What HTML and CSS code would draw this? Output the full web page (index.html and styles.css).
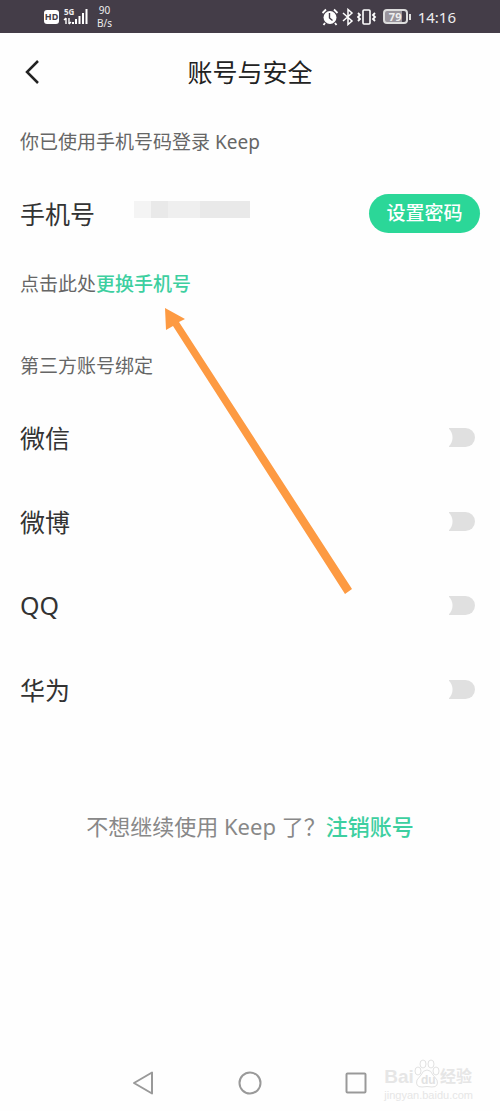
FILE: index.html
```html
<!DOCTYPE html>
<html lang="zh-CN">
<head>
  <meta charset="UTF-8">
  <meta name="viewport" content="width=device-width, initial-scale=1.0">
  <title>账号与安全</title>
  <link rel="stylesheet" href="styles.css">
</head>
<body>
  <div class="status-bar">
    <div class="status-left">
      <span class="hd">HD</span>
      <div class="signal">
        <span>5G</span>
        <svg width="26" height="20" viewBox="0 0 26 20" fill="#fff">
          <path d="M3 17v-6M1 13l2-2M6 11v6M6 17l2-2" fill="none" stroke="#fff" stroke-width="1.400"/>
          <rect x="9" y="15" width="2" height="2"/>
          <rect x="12" y="12" width="2" height="5"/>
          <rect x="15.500" y="9" width="2" height="8"/>
          <rect x="19" y="6" width="2" height="11"/>
          <rect x="22.500" y="2" width="2" height="15"/>
        </svg>
      </div>
      <div class="net-speed"><span>90</span><span>B/s</span></div>
    </div>
    <div class="status-right">
      <svg width="18" height="18" viewBox="0 0 18 18">
        <circle cx="9" cy="9.500" r="6.500" fill="#fff"/>
        <path d="M1.500 5L5 1.500M16.500 5L13 1.500M4 15l-1.500 2M14 15l1.500 2" stroke="#fff" stroke-width="1.800"/>
        <path d="M8.500 5v5l3 2.500" fill="none" stroke="#443d48" stroke-width="1.400"/>
      </svg>
      <svg width="12" height="18" viewBox="0 0 12 18">
        <path d="M1 5l9 8-4 3.500v-15L10 5l-9 8" fill="none" stroke="#fff" stroke-width="1.500"/>
      </svg>
      <svg width="20" height="18" viewBox="0 0 20 18" fill="none" stroke="#fff">
        <rect x="6" y="2" width="7" height="14" rx="1" stroke-width="1.600"/>
        <path d="M1 5l2 2-2 2 2 2-2 2M18 5l-2 2 2 2-2 2 2 2" stroke-width="1.800"/>
      </svg>
      <div class="battery">79</div>
      <span class="clock">14:16</span>
    </div>
  </div>

  <header class="header">
    <button class="back" aria-label="返回">
      <svg width="16" height="26" viewBox="0 0 16 26">
        <path d="M14 2L3 13l11 11" fill="none" stroke="#222" stroke-width="2.500"/>
      </svg>
    </button>
    <h1>账号与安全</h1>
  </header>

  <main class="content">
    <p class="caption">你已使用手机号码登录 Keep</p>
    <div class="row phone">
      <span>手机号</span>
      <div class="mosaic"><i></i><i></i><i></i><i></i></div>
      <button class="btn">设置密码</button>
    </div>
    <p class="caption hint">点击此处<a href="#">更换手机号</a></p>

    <h2 class="caption">第三方账号绑定</h2>
    <div class="row">
      <label for="wechat">微信</label>
      <input type="checkbox" class="switch" id="wechat">
    </div>
    <div class="row">
      <label for="weibo">微博</label>
      <input type="checkbox" class="switch" id="weibo">
    </div>
    <div class="row">
      <label for="qq">QQ</label>
      <input type="checkbox" class="switch" id="qq">
    </div>
    <div class="row">
      <label for="huawei">华为</label>
      <input type="checkbox" class="switch" id="huawei">
    </div>

    <p class="cancel">不想继续使用 Keep 了？<a href="#">注销账号</a></p>

    <svg class="arrow" width="190" height="288" viewBox="0 0 190 288">
      <path d="M1 0L21 11L15 14L188 281L181 286L9 18L2 22Z" fill="#fd9a42"/>
    </svg>
  </main>

  <nav class="nav-bar">
    <button aria-label="返回上一页">
      <svg width="24" height="24" viewBox="0 0 24 24"><path d="M2 12L20 1.500v21z"/></svg>
    </button>
    <button aria-label="主屏幕">
      <svg width="24" height="24" viewBox="0 0 24 24"><circle cx="12" cy="12" r="10.500"/></svg>
    </button>
    <button aria-label="最近任务">
      <svg width="24" height="24" viewBox="0 0 24 24"><rect x="2.500" y="2.500" width="19" height="19" rx="1"/></svg>
    </button>
    <div class="watermark">
      <div class="wm-logo">
        <span>Bai</span>
        <svg width="26" height="30" viewBox="0 0 26 30">
          <ellipse cx="4" cy="12" rx="3" ry="4"/>
          <ellipse cx="9" cy="5" rx="3" ry="4"/>
          <ellipse cx="17" cy="5" rx="3" ry="4"/>
          <ellipse cx="22" cy="12" rx="3" ry="4"/>
          <path d="M13 11q4 0 6 5l4 5q2 7-5 7-5-1-10 0-7 0-5-7l4-5q2-5 6-5z"/>
          <text x="7" y="25" class="wm-du">du</text>
        </svg>
        <span>经验</span>
      </div>
      <div class="wm-url">jingyan.baidu.com</div>
    </div>
  </nav>
</body>
</html>
```
FILE: styles.css
```css
* {
  box-sizing: border-box;
}

body {
  margin: 0;
  min-height: 100vh;
  display: flex;
  flex-direction: column;
  background: #fefefe;
  color: #333;
  font-family: "Noto Sans", "Noto Sans CJK SC", sans-serif;
}

h1, h2, p {
  margin: 0;
  font-weight: 400;
}

button {
  border: 0;
  padding: 0;
  background: none;
  font-family: inherit;
  cursor: pointer;
}

a {
  color: #3dcfa0;
  font-weight: 500;
  text-decoration: none;
}

svg {
  display: block;
}

.status-bar {
  height: 33px;
  padding: 0 44px;
  display: flex;
  align-items: center;
  justify-content: space-between;
  background: #443d48;
  color: #eee;
}

.status-left,
.status-right {
  display: flex;
  align-items: center;
}

.status-right {
  gap: 3px;
}

.hd {
  width: 15px;
  height: 14px;
  border-radius: 3px;
  background: #fff;
  color: #443d48;
  font-size: 9px;
  font-weight: 700;
  line-height: 14px;
  text-align: center;
}

.signal {
  position: relative;
  margin: 0 8px 0 4px;
}

.signal span {
  position: absolute;
  left: 1px;
  top: 0;
  font-size: 8px;
  font-weight: 700;
  line-height: 10px;
}

.net-speed {
  display: flex;
  flex-direction: column;
  align-items: center;
  font-size: 10px;
  line-height: 13px;
}

.battery {
  position: relative;
  width: 25px;
  height: 15px;
  margin: 0 7px 0 3px;
  border: 2px solid #ddd;
  border-radius: 4px;
  background: linear-gradient(90deg, #99949c 80%, #443d48 80%);
  font-size: 11px;
  font-weight: 700;
  line-height: 11px;
  text-align: center;
}

.battery::after {
  content: "";
  position: absolute;
  right: -5px;
  top: 3px;
  width: 2px;
  height: 6px;
  background: #ddd;
}

.clock {
  font-size: 15px;
}

.header {
  height: 78px;
  padding: 0 24px;
  display: grid;
  grid-template-columns: 24px 1fr 24px;
  align-items: center;
}

.header h1 {
  font-size: 25px;
  line-height: 36px;
  text-align: center;
  color: #222;
}

.content {
  position: relative;
  padding: 16px 20px 0;
}

.caption {
  font-size: 19px;
  line-height: 30px;
  color: #666;
}

.row {
  height: 84px;
  display: flex;
  align-items: center;
  justify-content: space-between;
  font-size: 25px;
}

.phone {
  height: 112px;
}

.hint {
  margin-bottom: 52px;
}

h2.caption {
  margin-bottom: 14px;
}

.mosaic {
  display: flex;
  margin: 0 auto 8px 39px;
}

.mosaic i {
  width: 17px;
  height: 17px;
  background: #f4f4f4;
}

.mosaic i:nth-child(2) {
  background: #e9e9e9;
}

.mosaic i:nth-child(3) {
  width: 32px;
  background: #efefef;
}

.mosaic i:nth-child(4) {
  width: 50px;
  background: #e9e9e9;
}

.btn {
  width: 111px;
  height: 39px;
  border-radius: 20px;
  background: #2bd798;
  color: #fff;
  font-size: 19px;
  font-weight: 500;
  line-height: 39px;
}

.switch {
  appearance: none;
  width: 26px;
  height: 19px;
  margin: 0 5px 0 0;
  border-radius: 0 10px 10px 0;
  background: radial-gradient(circle at -9px 50%, #fefefe 12px, #e0e0e0 13px);
}

.cancel {
  margin-top: 79px;
  font-size: 22px;
  line-height: 32px;
  text-align: center;
  color: #888;
}

.arrow {
  position: absolute;
  left: 164px;
  top: 197px;
  pointer-events: none;
}

.nav-bar {
  position: relative;
  height: 56px;
  margin-top: auto;
  display: flex;
  align-items: center;
  justify-content: center;
  gap: 82px;
}

.nav-bar > button svg {
  fill: none;
  stroke: #999;
  stroke-width: 2;
  stroke-linejoin: round;
}

.watermark {
  position: absolute;
  right: 27px;
  bottom: 10px;
  color: #e6e6e6;
  font-family: "Liberation Sans", "Noto Sans CJK SC", sans-serif;
}

.wm-logo {
  display: flex;
  align-items: flex-end;
  font-size: 19px;
  font-weight: 700;
  line-height: 24px;
}

.wm-logo span:last-child {
  font-size: 16px;
}

.wm-logo svg {
  fill: #fff;
  stroke: #e2e2e2;
}

.wm-logo .wm-du {
  font-size: 12px;
  fill: #e2e2e2;
  stroke: none;
}

.wm-url {
  font-size: 11px;
  line-height: 12px;
}
```
